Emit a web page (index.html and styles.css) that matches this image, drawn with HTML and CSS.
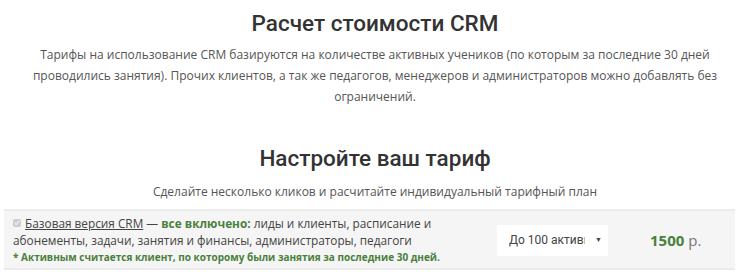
FILE: index.html
```html
<!DOCTYPE html>
<html lang="ru">
<head>
  <meta charset="UTF-8">
  <meta name="viewport" content="width=device-width, initial-scale=1.0">
  <title>Расчет стоимости CRM</title>
  <link rel="stylesheet" href="styles.css">
</head>
<body>
  <section class="intro">
    <h1>Расчет стоимости CRM</h1>
    <p>Тарифы на использование CRM базируются на количестве активных учеников (по которым за последние 30 дней проводились занятия). Прочих клиентов, а так же педагогов, менеджеров и администраторов можно добавлять без ограничений.</p>
  </section>

  <section class="setup">
    <h2>Настройте ваш тариф</h2>
    <p class="lead">Сделайте несколько кликов и расчитайте индивидуальный тарифный план</p>

    <div class="tariff-row">
      <div class="tariff-info">
        <div class="tariff-desc">
          <input type="checkbox" checked disabled class="tariff-check">
          <a href="#" class="tariff-link">Базовая версия CRM</a> — <b class="green">все включено:</b> лиды и клиенты, расписание и абонементы, задачи, занятия и финансы, администраторы, педагоги
        </div>
        <div class="tariff-note">* Активным считается клиент, по которому были занятия за последние 30 дней.</div>
      </div>
      <div class="tariff-select">
        <span class="select-text">До 100 активн</span>
        <span class="select-arrow">▼</span>
      </div>
      <div class="tariff-price"><b>1500</b> р.</div>
    </div>
  </section>
</body>
</html>
```

FILE: styles.css
```css
body {
  margin: 0;
  padding: 0;
  font-family: 'Open Sans', sans-serif;
  color: #555;
  background-color: #fff;
}
h1, h2 {
  font-family: Roboto, sans-serif;
  font-weight: 500;
  color: #333;
  margin: 0;
  text-align: center;
}
h1 {
  font-size: 22.5px;
  line-height: 30px;
  padding-top: 8px;
}
.intro p {
  font-size: 12px;
  line-height: 21px;
  text-align: center;
  max-width: 690px;
  margin: 6px auto 0;
}
.setup {
  padding-top: 34px;
}
h2 {
  font-size: 22.5px;
  line-height: 30px;
  padding-top: 2px;
}
.lead {
  font-size: 12px;
  line-height: 18px;
  text-align: center;
  margin: 10px 0 0;
}
.tariff-row {
  display: flex;
  align-items: center;
  margin: 8px 15px 0 4px;
  background-color: #f5f5f5;
  border-top: 2px solid #ececec;
  border-bottom: 2px solid #ececec;
  padding: 4px 0 3px 9px;
}
.tariff-info {
  width: 472px;
}
.tariff-desc {
  font-size: 11.8px;
  line-height: 17px;
  color: #444;
}
.tariff-check {
  width: 8px;
  height: 8px;
  margin: 0 1px 0 0;
  vertical-align: 1px;
}
.tariff-link {
  color: #444;
  text-decoration: underline;
}
.green {
  color: #4b7f3d;
}
.tariff-note {
  font-size: 10px;
  line-height: 16px;
  font-weight: 700;
  color: #4b7f3d;
}
.tariff-select {
  width: 111px;
  height: 31px;
  margin-left: 12px;
  background-color: #fff;
  display: flex;
  align-items: center;
  justify-content: space-between;
  padding: 0 6px 0 12px;
  box-sizing: border-box;
  font-family: Roboto, sans-serif;
  font-size: 12px;
  color: #444;
}
.select-text {
  white-space: nowrap;
  overflow: hidden;
  width: 76px;
}
.select-arrow {
  font-size: 7px;
  color: #444;
}
.tariff-price {
  margin-left: 42px;
  font-size: 15px;
  color: #777;
}
.tariff-price b {
  color: #4b7f3d;
}
```
